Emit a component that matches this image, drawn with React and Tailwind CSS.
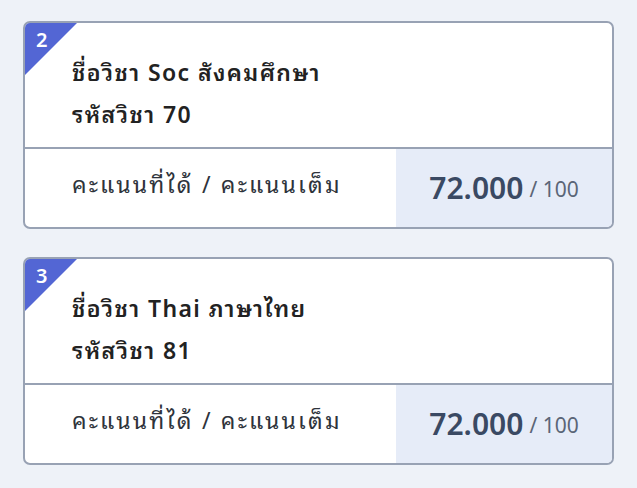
import React from 'react';

const subjects = [
  { no: 2, name: 'Soc สังคมศึกษา', code: '70', score: '72.000', full: '100' },
  { no: 3, name: 'Thai ภาษาไทย', code: '81', score: '72.000', full: '100' },
];

const SubjectCard = ({ subject }) => {
  return (
    <div className="relative overflow-hidden rounded-[7px] border-2 border-[#98a2b4] bg-white">
      {/* corner ribbon */}
      <div className="absolute left-0 top-0 h-[52px] w-[52px] bg-[#5366d4] [clip-path:polygon(0_0,100%_0,0_100%)]" />
      <span className="absolute left-[11px] top-[7px] text-[20px] font-semibold leading-none text-white">{subject.no}</span>

      <div className="flex h-[124px] flex-col gap-[13px] pl-[47px] pt-[35px] tracking-[1.4px]">
        <p className="text-[23px] font-semibold leading-[29px] text-[#222]">ชื่อวิชา {subject.name}</p>
        <p className="text-[23px] font-semibold leading-[29px] text-[#222]">รหัสวิชา {subject.code}</p>
      </div>

      <div className="flex h-[80px] border-t-2 border-[#98a2b4]">
        <div className="flex flex-1 items-center pb-[7px] pl-[47px] text-[23px] tracking-[2.2px] text-[#2e333b]">
          คะแนนที่ได้ / คะแนนเต็ม
        </div>
        <div className="flex w-[216px] items-center justify-center gap-[6px] bg-[#e6ecf8] pb-[2px]">
          <span className="text-[30px] font-semibold text-[#3a4963]">{subject.score}</span>
          <span className="pt-[6px] text-[21px] text-[#5b6577]">/ {subject.full}</span>
        </div>
      </div>
    </div>
  );
};

export default function App() {
  return (
    <div className="min-h-[488px] bg-[#eef2f8] px-[23px] pt-[21px] font-['Noto_Sans','Noto_Sans_Thai_Looped','Loma','Garuda','Waree','Sarabun','Noto_Sans_Thai',sans-serif]">
      <div className="flex flex-col gap-[28px]">
        {subjects.map((s) => (
          <SubjectCard key={s.no} subject={s} />
        ))}
      </div>
    </div>
  );
}
